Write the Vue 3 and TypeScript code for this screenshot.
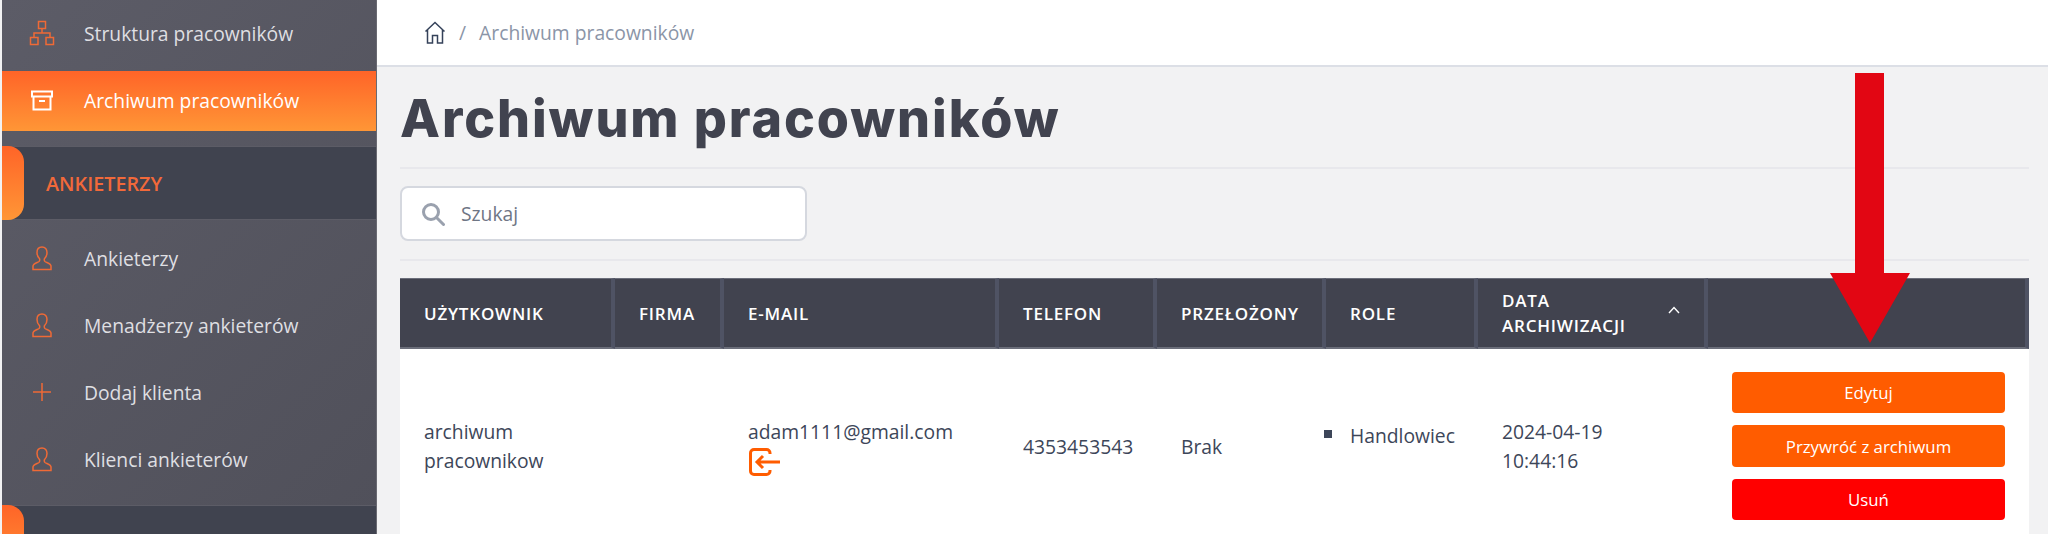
<template>
  <div class="page">
    <!-- Sidebar -->
    <aside class="sidebar">
      <a class="nav-link">
        <span class="nav-icon">
          <svg width="26" height="26" viewBox="0 0 26 26" fill="none" stroke="currentColor" stroke-width="1.5">
            <rect x="9.5" y="1.5" width="7" height="7" />
            <rect x="1.5" y="17.5" width="7.5" height="7" />
            <rect x="17" y="17.5" width="7.5" height="7" />
            <path d="M13 8.5v4.5M5 17.5V13h16v4.5" />
          </svg>
        </span>
        <span>Struktura pracowników</span>
      </a>
      <a class="nav-link active">
        <span class="nav-icon">
          <svg width="22" height="21" viewBox="0 0 22 21" fill="none" stroke="currentColor" stroke-width="2">
            <rect x="1" y="1.5" width="20" height="5" />
            <path d="M2.5 6.5V19.5H19.500V6.5M8 11h6" />
          </svg>
        </span>
        <span>Archiwum pracowników</span>
      </a>

      <div class="section first">
        <span class="section-tab"></span>
        <span class="section-name">ANKIETERZY</span>
      </div>

      <div class="section-links">
        <a class="nav-link" v-for="item in items" :key="item.label">
          <span class="nav-icon">
            <svg v-if="item.icon === 'user'" width="20" height="25" viewBox="0 0 20 25" fill="none" stroke="currentColor" stroke-width="1.500">
              <path d="M10 1C6.800 1 5 3.400 5 6.400c0 2.600 1 4.700 2.400 6.100.5.6.5 2.300-.4 3C5.500 16.600 1 17.800 1 20v3.500h18V20c0-2.200-4.500-3.400-6-4.500-.9-.7-.9-2.400-.4-3C14 11.100 15 9 15 6.400 15 3.400 13.200 1 10 1z" />
            </svg>
            <svg v-else width="20" height="20" viewBox="0 0 20 20" fill="none" stroke="currentColor" stroke-width="1.500">
              <path d="M10 1v18M1 10h18" />
            </svg>
          </span>
          <span>{{ item.label }}</span>
        </a>
      </div>

      <div class="section">
        <span class="section-tab"></span>
      </div>
    </aside>

    <main class="main">
      <!-- Breadcrumb -->
      <div class="topbar">
        <svg class="home" width="22" height="23" viewBox="0 0 22 23" fill="none" stroke="#35425a" stroke-width="1.500">
          <path d="M1.500 10.500 11 1.500l9.500 9M3.500 9v13h5v-7.500h5V22h5V9" />
        </svg>
        <span class="slash">/</span>
        <span class="crumb">Archiwum pracowników</span>
      </div>

      <div class="content">
        <h1 class="title">Archiwum pracowników</h1>

        <div class="search-row">
          <div class="search">
            <svg width="24" height="24" viewBox="0 0 24 24" fill="none" stroke="#9aa1ae" stroke-width="3">
              <circle cx="10" cy="10" r="7.500" />
              <path d="m15.500 15.500 7 7" stroke-linecap="round" />
            </svg>
            <span>Szukaj</span>
          </div>
        </div>

        <table class="table">
          <colgroup>
            <col v-for="w in colWidths" :key="w" :width="w" />
          </colgroup>
          <thead>
            <tr>
              <th>Użytkownik</th>
              <th>Firma</th>
              <th>E-mail</th>
              <th>Telefon</th>
              <th>Przełożony</th>
              <th>Role</th>
              <th>
                <div class="sort-head">
                  <span>Data<br />archiwizacji</span>
                  <svg width="12" height="8" viewBox="0 0 12 8" fill="none" stroke="#fff" stroke-width="1.400">
                    <path d="m1 7 5-5.500L11 7" />
                  </svg>
                </div>
              </th>
              <th></th>
            </tr>
          </thead>
          <tbody>
            <tr>
              <td>archiwum<br />pracownikow</td>
              <td></td>
              <td class="email-cell">
                <div>adam1111@gmail.com</div>
                <svg class="login" width="31" height="28" viewBox="0 0 31 28" fill="none" stroke="#ff5c00" stroke-width="3">
                  <path d="M21 6V5a3.500 3.500 0 0 0-3.500-3.500H5A3.500 3.500 0 0 0 1.500 5v18A3.500 3.500 0 0 0 5 26.500h12.500A3.500 3.500 0 0 0 21 23v-1" />
                  <path d="M31 14H8M14 8l-6 6 6 6" />
                </svg>
              </td>
              <td>4353453543</td>
              <td>Brak</td>
              <td class="role-cell">
                <span class="bullet"></span>
                <span>Handlowiec</span>
              </td>
              <td>2024-04-19<br />10:44:16</td>
              <td class="actions">
                <button class="btn">Edytuj</button>
                <button class="btn tall">Przywróć z archiwum</button>
                <button class="btn danger">Usuń</button>
              </td>
            </tr>
          </tbody>
        </table>
      </div>
    </main>

    <!-- annotation arrow on top of the screenshot -->
    <svg class="arrow" width="80" height="270" viewBox="0 0 80 270">
      <path d="M25 0h29v200h26l-40 70L0 200h25z" fill="#e20613" />
    </svg>
  </div>
</template>

<script setup lang="ts">
type NavItem = {
  label: string,
  icon: 'user' | 'plus'
}

const items: NavItem[] = [
  { label: 'Ankieterzy', icon: 'user' },
  { label: 'Menadżerzy ankieterów', icon: 'user' },
  { label: 'Dodaj klienta', icon: 'plus' },
  { label: 'Klienci ankieterów', icon: 'user' },
];

const colWidths: number[] = [215, 109, 275, 158, 169, 152, 230, 321];
</script>

<style scoped>
  * {
    box-sizing: border-box;
  }

  .page {
    position: relative;
    display: flex;
    width: 2048px;
    height: 534px;
    overflow: hidden;
    background-color: #f2f2f3;
    font-family: "Open Sans", "Noto Sans", sans-serif;
    font-size: 19.3px;
    color: #3d4659;
  }

  .sidebar {
    width: 375px;
    margin-left: 2px;
    padding-top: 4px;
    flex-shrink: 0;
    background-image: linear-gradient(135deg, #5c5c67, #50505a);
    border-right: 1px solid #6a6a72;
    color: #dfdfe2;
  }

  .nav-link {
    display: flex;
    align-items: center;
    height: 60px;
    margin-bottom: 7px;
    padding-bottom: 2px;
  }

  .nav-icon {
    display: flex;
    justify-content: center;
    width: 82px;
    padding-right: 2px;
    color: #ef6a36;
  }

  .nav-link.active {
    background-image: linear-gradient(#ff6428, #ff9636);
    color: #fff;
  }

  .nav-link.active .nav-icon {
    color: #fff;
  }

  .section {
    display: flex;
    height: 74px;
    background-color: #40434f;
    border-top: 1px solid #5c5c66;
    border-bottom: 1px solid #5c5c66;
  }

  .section.first {
    margin-top: 15px;
    margin-bottom: 9px;
  }

  .section-links {
    margin-bottom: 15px;
  }

  .section-tab {
    width: 22px;
    margin-top: -1px;
    margin-bottom: -1px;
    border-radius: 0 16px 16px 0;
    background-image: linear-gradient(#ff6428, #ff9636);
  }

  .section-name {
    align-self: center;
    padding-left: 22px;
    font-size: 19.8px;
    font-weight: 600;
    color: #f2693a;
  }

  .main {
    flex: 1;
    min-width: 0;
  }

  .topbar {
    display: flex;
    align-items: center;
    height: 67px;
    padding-left: 47px;
    background-color: #fff;
    border-bottom: 2px solid #dcdfe6;
    color: #8b95a7;
  }

  .slash {
    margin-left: 13px;
    margin-right: 13px;
  }

  .content {
    padding: 0 19px 0 23px;
  }

  .title {
    height: 102px;
    margin: 0;
    border-bottom: 2px solid #e8e8ec;
    font-family: Inter, sans-serif;
    font-size: 52px;
    font-weight: 800;
    line-height: 104px;
    letter-spacing: 1.9px;
    color: #41434f;
  }

  .search-row {
    padding: 17px 0 18px;
    border-bottom: 2px solid #e8e8ec;
  }

  .search {
    display: flex;
    align-items: center;
    gap: 16px;
    width: 407px;
    height: 55px;
    padding-left: 19px;
    background-color: #fff;
    border: 2px solid #d5d8df;
    border-radius: 8px;
    color: #6f7685;
  }

  .table {
    width: 1629px;
    margin-top: 17px;
    border-collapse: separate;
    border-spacing: 0;
    table-layout: fixed;
    background-color: #fff;
  }

  .table thead tr {
    height: 71px;
    background-color: #41434f;
  }

  .table th {
    padding: 0 0 0 24px;
    border-right: 4px solid #4f5364;
    border-top: 1px solid #6b6e7a;
    border-bottom: 2px solid #6b6e7a;
    text-align: left;
    text-transform: uppercase;
    font-size: 17px;
    font-weight: 600;
    line-height: 25px;
    letter-spacing: 0.8px;
    color: #fff;
  }

  .sort-head {
    display: flex;
    align-items: center;
    justify-content: space-between;
    padding-right: 24px;
  }

  .sort-head svg {
    margin-bottom: 6px;
  }

  .table td {
    height: 194px;
    padding: 0 0 0 24px;
    line-height: 29px;
    vertical-align: middle;
  }

  .email-cell svg {
    display: block;
    margin-top: 3px;
    margin-left: 1px;
  }

  .email-cell div {
    margin-bottom: -1px;
  }

  .role-cell {
    position: relative;
    padding-bottom: 22px !important;
  }

  .bullet {
    position: absolute;
    left: -2px;
    top: 81px;
    width: 8px;
    height: 8px;
    background-color: #3d4659;
  }

  .actions {
    padding: 0 !important;
  }

  .btn {
    display: block;
    width: 273px;
    height: 41px;
    margin: 0 0 12px 24px;
    border: 0;
    border-radius: 4px;
    background-color: #ff5c00;
    font-family: inherit;
    font-size: 16.800px;
    color: #fff;
  }

  .btn.tall {
    height: 42px;
  }

  .btn.danger {
    margin-bottom: 0;
    background-color: #ff0000;
  }

  .arrow {
    position: absolute;
    left: 1830px;
    top: 73px;
  }
</style>
